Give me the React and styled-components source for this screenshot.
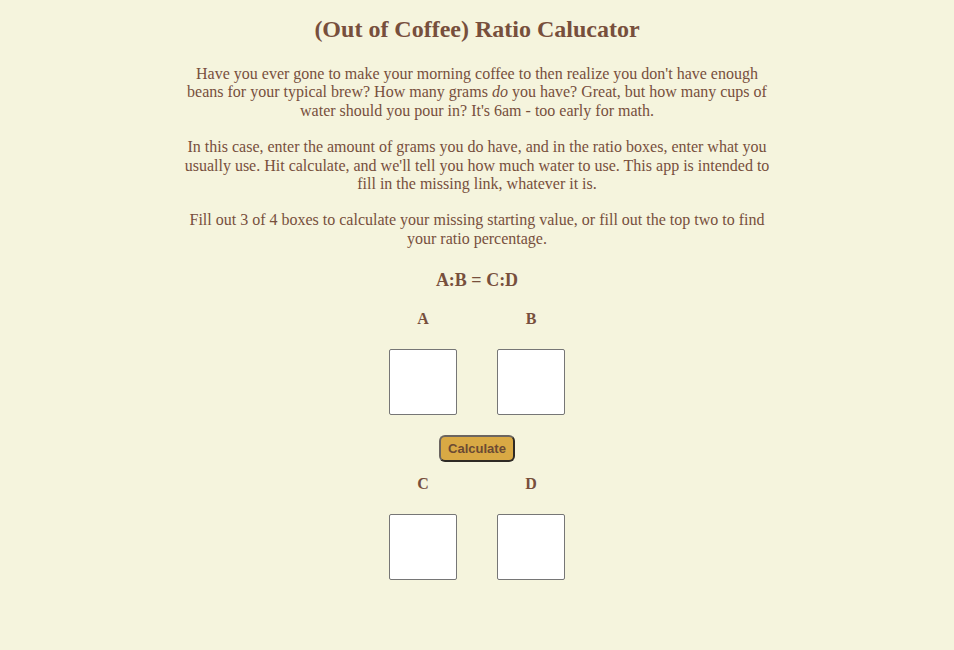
import React from 'react'
import styled, { createGlobalStyle } from 'styled-components'

const GlobalStyle = createGlobalStyle`
  body {
    margin: 0;
    background-color: #f5f4dd;
    font-family: "Liberation Serif", "Times New Roman", serif;
    color: #774f3c;
  }
`

const Page = styled.div`
  width: 600px;
  margin: 0 auto;
  padding-top: 16px;
  text-align: center;
`

const Title = styled.h1`
  font-size: 24px;
  font-weight: bold;
  margin: 0 0 22px;
  line-height: 27px;
`

const Text = styled.p`
  font-size: 16px;
  line-height: 18.4px;
  margin: 0 0 18px;
`

const Formula = styled.h3`
  font-size: 18px;
  font-weight: bold;
  margin: 22px 0 0;
  line-height: 21px;
`

const Grid = styled.div`
  display: grid;
  grid-template-columns: 68px 68px;
  column-gap: 40px;
  justify-content: center;
  margin-top: ${p => p.$top}px;
`

const Label = styled.div`
  font-size: 16px;
  font-weight: bold;
  line-height: 18px;
  margin-bottom: 21px;
`

const Box = styled.input`
  box-sizing: border-box;
  width: 68px;
  height: 66px;
  border: 1px solid #767676;
  border-radius: 2px;
  background: #fff;
  padding: 0;
`

const ButtonRow = styled.div`
  display: flex;
  justify-content: center;
  margin-top: 20px;
`

const CalcButton = styled.button`
  box-sizing: border-box;
  width: 76px;
  height: 27px;
  background-color: #d9a944;
  border: 2px solid #2e2a25;
  border-top-color: #6b6560;
  border-left-color: #6b6560;
  border-radius: 6px;
  font-family: "Liberation Sans", Arial, sans-serif;
  font-weight: bold;
  font-size: 13px;
  color: #6b4a33;
  padding: 0;
`

function Pair({ left, right, top }) {
  return (
    <Grid $top={top}>
      <Label>{left}</Label>
      <Label>{right}</Label>
      <Box type="text" />
      <Box type="text" />
    </Grid>
  )
}

function App() {
  return (
    <Page>
      <GlobalStyle />
      <Title>(Out of Coffee) Ratio Calucator</Title>
      <Text>
        Have you ever gone to make your morning coffee to then realize you don't have enough
        beans for your typical brew? How many grams <em>do</em> you have? Great, but how many cups of
        water should you pour in? It's 6am - too early for math.
      </Text>
      <Text>
        In this case, enter the amount of grams you do have, and in the ratio boxes, enter what you
        usually use. Hit calculate, and we'll tell you how much water to use. This app is intended to
        fill in the missing link, whatever it is.
      </Text>
      <Text>
        Fill out 3 of 4 boxes to calculate your missing starting value, or fill out the top two to find
        your ratio percentage.
      </Text>
      <Formula>A:B = C:D</Formula>
      <Pair left="A" right="B" top={19} />
      <ButtonRow>
        <CalcButton>Calculate</CalcButton>
      </ButtonRow>
      <Pair left="C" right="D" top={13} />
    </Page>
  )
}

export default App
